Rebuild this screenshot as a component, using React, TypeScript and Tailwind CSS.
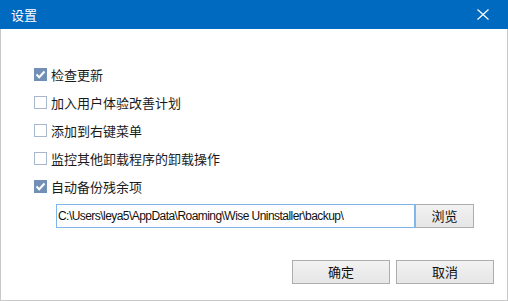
import { useState } from 'react'

const cjk = { fontFamily: '"Noto Sans CJK SC", "Liberation Sans", sans-serif' }

type Option = { label: string; checked: boolean }

const initial: Option[] = [
  { label: '检查更新', checked: true },
  { label: '加入用户体验改善计划', checked: false },
  { label: '添加到右键菜单', checked: false },
  { label: '监控其他卸载程序的卸载操作', checked: false },
  { label: '自动备份残余项', checked: true },
]

function Box({ checked }: { checked: boolean }) {
  if (checked) {
    return (
      <span className="flex h-[13px] w-[13px] shrink-0 items-center justify-center bg-[#7290b6]">
        <svg width="11" height="9" viewBox="0 0 11 9" fill="none">
          <path d="M1.5 4.5 L4.2 7.2 L9.5 1.5" stroke="white" strokeWidth="2" />
        </svg>
      </span>
    )
  }
  return <span className="h-[13px] w-[13px] shrink-0 border border-[#a8b8cc] bg-white" />
}

export default function App() {
  const [opts, setOpts] = useState(initial)
  const path = 'C:\\Users\\leya5\\AppData\\Roaming\\Wise Uninstaller\\backup\\'

  return (
    <div className="flex h-[301px] w-[508px] flex-col border-x border-b border-[#c9c9c9] bg-white" style={cjk}>
      <div className="-mx-px flex h-[29px] shrink-0 items-center justify-between bg-[#0069c0] pl-[11px] pr-[19px]">
        <span className="text-[13px] leading-none text-white">设置</span>
        <svg width="12" height="11" viewBox="0 0 12 11">
          <path d="M0.5 0.5 L11.5 10.5 M11.5 0.5 L0.5 10.5" stroke="white" strokeWidth="1.2" />
        </svg>
      </div>

      <div className="flex flex-col pl-[33px] pt-[31px]">
        {opts.map((o, i) => (
          <label
            key={o.label}
            className="flex h-[28px] cursor-default items-center gap-[4px] text-[13px] text-[#1a1a1a]"
            onClick={() => setOpts(opts.map((x, j) => (j === i ? { ...x, checked: !x.checked } : x)))}
          >
            <Box checked={o.checked} />
            <span className="leading-none">{o.label}</span>
          </label>
        ))}
      </div>

      <div className="mt-[4px] flex pl-[55px]">
        <div
          className="flex h-[24px] w-[359px] items-center border border-[#7eb4ea] px-[1px] text-[12px] tracking-[-0.55px] text-[#111]"
          style={{ fontFamily: '"Liberation Sans", Arial, sans-serif' }}
        >
          {path}
        </div>
        <button className="h-[24px] w-[59px] border border-[#adadad] bg-gradient-to-b from-[#f2f2f2] to-[#e6e6e6] text-[13px] text-[#111]">
          浏览
        </button>
      </div>

      <div className="mt-[32px] flex justify-end gap-[6px] pr-[13px]">
        <button className="h-[24px] w-[98px] border border-[#adadad] bg-gradient-to-b from-[#f2f2f2] to-[#e6e6e6] text-[13px] text-[#111]">
          确定
        </button>
        <button className="h-[24px] w-[98px] border border-[#adadad] bg-gradient-to-b from-[#f2f2f2] to-[#e6e6e6] text-[13px] text-[#111]">
          取消
        </button>
      </div>
    </div>
  )
}
